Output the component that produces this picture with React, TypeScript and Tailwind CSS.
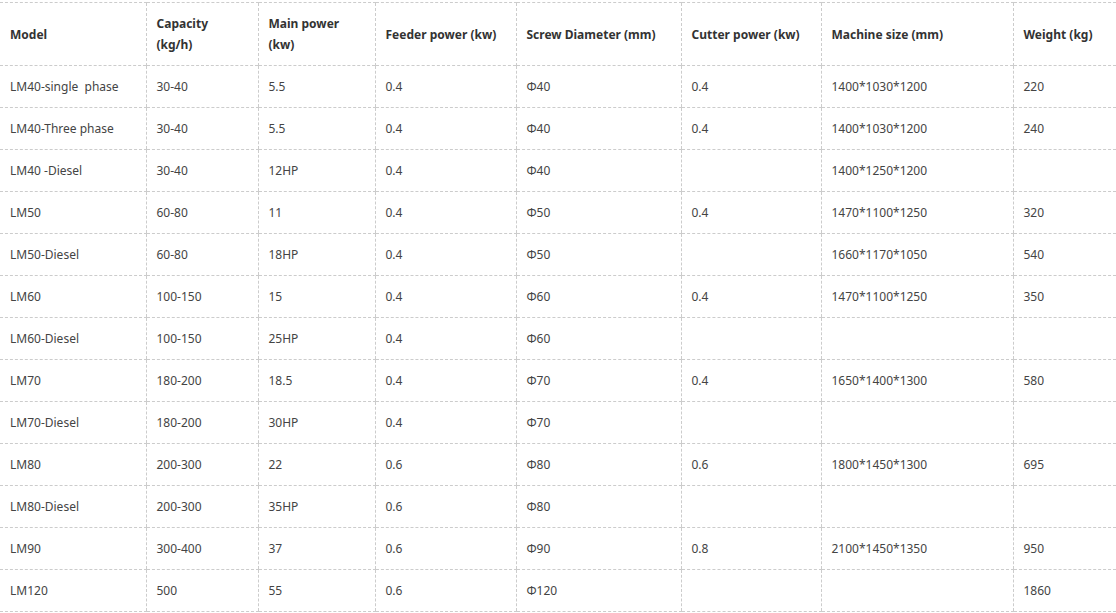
const rows = [
  ["LM40-single\u00a0 phase", "30-40", "5.5", "0.4", "Φ40", "0.4", "1400*1030*1200", "220"],
  ["LM40-Three phase", "30-40", "5.5", "0.4", "Φ40", "0.4", "1400*1030*1200", "240"],
  ["LM40 -Diesel", "30-40", "12HP", "0.4", "Φ40", "", "1400*1250*1200", ""],
  ["LM50", "60-80", "11", "0.4", "Φ50", "0.4", "1470*1100*1250", "320"],
  ["LM50-Diesel", "60-80", "18HP", "0.4", "Φ50", "", "1660*1170*1050", "540"],
  ["LM60", "100-150", "15", "0.4", "Φ60", "0.4", "1470*1100*1250", "350"],
  ["LM60-Diesel", "100-150", "25HP", "0.4", "Φ60", "", "", ""],
  ["LM70", "180-200", "18.5", "0.4", "Φ70", "0.4", "1650*1400*1300", "580"],
  ["LM70-Diesel", "180-200", "30HP", "0.4", "Φ70", "", "", ""],
  ["LM80", "200-300", "22", "0.6", "Φ80", "0.6", "1800*1450*1300", "695"],
  ["LM80-Diesel", "200-300", "35HP", "0.6", "Φ80", "", "", ""],
  ["LM90", "300-400", "37", "0.6", "Φ90", "0.8", "2100*1450*1350", "950"],
  ["LM120", "500", "55", "0.6", "Φ120", "", "", "1860"],
];

const widths = [146, 112, 117, 141, 165, 140, 192, 103];

const th = "border-t border-l border-dashed border-[#cccccc] pl-[10px] pr-[9px] text-left font-bold text-[#333] leading-[21px]";

export default function App() {
  return (
    <div className="w-[1116px] h-[613px] overflow-hidden bg-white pt-[2px] font-['Noto_Sans',sans-serif]">
      <table className="table-fixed border-collapse w-[1116px] text-[12px]">
        <colgroup>
          {widths.map((w, i) => (
            <col key={i} style={{ width: w }} />
          ))}
        </colgroup>
        <thead>
          <tr className="h-[63px]">
            <th className="border-t border-dashed border-[#cccccc] pl-[10px] pr-[9px] text-left font-bold text-[#333] leading-[21px]">Model</th>
            <th className={th}>
              Capacity
              <br />
              (kg/h)
            </th>
            <th className={th}>
              Main power
              <br />
              (kw)
            </th>
            <th className={th}>Feeder power (kw)</th>
            <th className={th}>Screw Diameter (mm)</th>
            <th className={th}>Cutter power (kw)</th>
            <th className={th}>Machine size (mm)</th>
            <th className={th}>Weight (kg)</th>
          </tr>
        </thead>
        <tbody>
          {rows.map((r, i) => (
            <tr key={i} className="h-[42px]">
              {r.map((c, j) => (
                <td
                  key={j}
                  className={
                    j === 0
                      ? "border-t border-b border-dashed border-[#cccccc] pl-[10px] pr-[9px] text-[#444] whitespace-nowrap"
                      : "border-t border-b border-l border-dashed border-[#cccccc] pl-[10px] pr-[9px] text-[#444] whitespace-nowrap"
                  }
                >
                  {c}
                </td>
              ))}
            </tr>
          ))}
        </tbody>
      </table>
    </div>
  );
}
